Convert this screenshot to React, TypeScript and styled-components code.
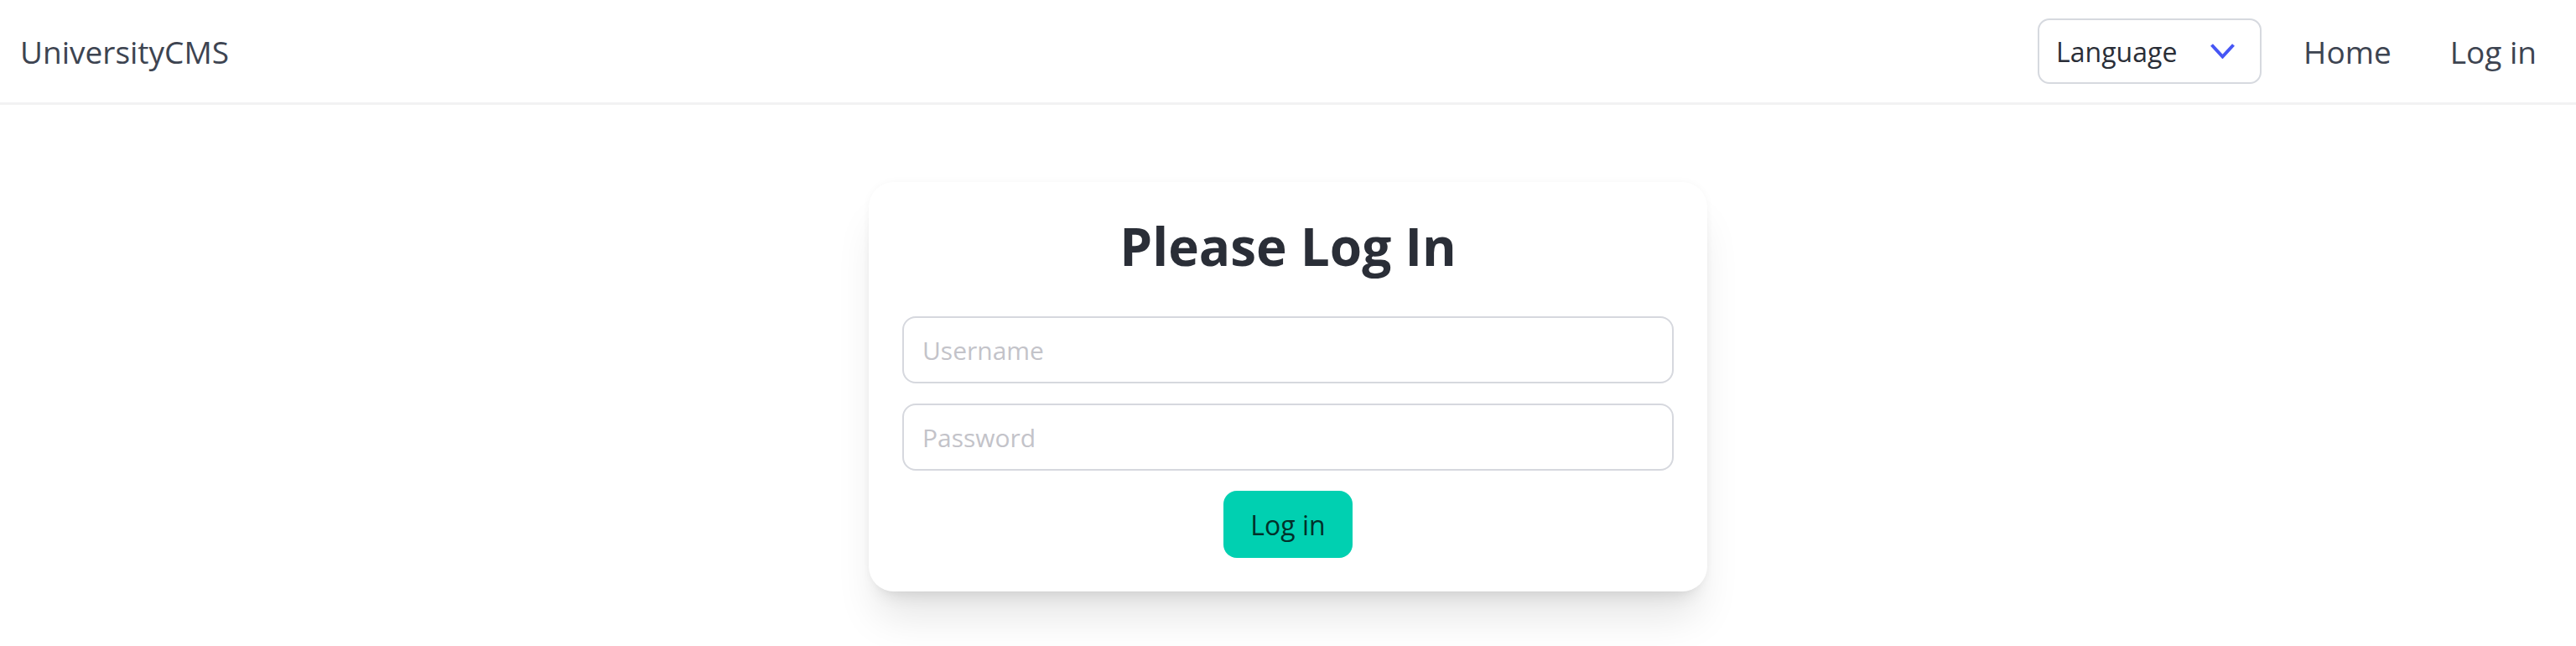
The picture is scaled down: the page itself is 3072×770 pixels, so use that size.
import React, { useState } from 'react';
import styled, { createGlobalStyle } from 'styled-components';

const GlobalStyle = createGlobalStyle`
  html, body {
    margin: 0;
    padding: 0;
    background: #ffffff;
    font-family: "Open Sans", "Noto Sans", sans-serif;
  }
  * {
    box-sizing: border-box;
  }
`;

const Page = styled.div`
  min-height: 100vh;
  background: #ffffff;
`;

const NavBar = styled.nav`
  display: flex;
  align-items: center;
  justify-content: space-between;
  height: 125px;
  padding: 0 23px 0 24px;
  border-bottom: 3px solid #f2f2f3;
`;

const Brand = styled.a`
  font-size: 37px;
  color: #3d4451;
  text-decoration: none;
  cursor: pointer;
`;

const NavRight = styled.div`
  display: flex;
  align-items: center;
  gap: 22px;
`;

const LanguageSelect = styled.button`
  display: flex;
  align-items: center;
  justify-content: space-between;
  width: 267px;
  height: 78px;
  margin-right: 4px;
  padding: 0 30px 0 20px;
  background: #ffffff;
  border: 2px solid #d6d9df;
  border-radius: 14px;
  font-family: inherit;
  font-size: 32px;
  color: #2a2e37;
  cursor: pointer;
`;

const Chevron = styled.svg`
  width: 29px;
  height: 18px;
  display: block;
`;

const NavLink = styled.a`
  padding: 0 24px;
  font-size: 37px;
  color: #3d4451;
  text-decoration: none;
  cursor: pointer;
`;

const Main = styled.main`
  display: flex;
  justify-content: center;
  padding-top: 92px;
`;

const Card = styled.form`
  display: flex;
  flex-direction: column;
  align-items: center;
  gap: 24px;
  width: 1000px;
  padding: 40px;
  background: #ffffff;
  border-radius: 30px;
  box-shadow: 0 0 10px rgba(0, 0, 0, 0.035), 0 40px 50px -10px rgba(0, 0, 0, 0.1),
    0 16px 20px -12px rgba(0, 0, 0, 0.1);
`;

const Title = styled.h1`
  margin: 0 0 24px;
  font-size: 62px;
  line-height: 72px;
  font-weight: 700;
  color: #2a2e37;
`;

const Input = styled.input`
  width: 100%;
  height: 80px;
  padding: 0 22px;
  border: 2px solid #d6d8de;
  border-radius: 16px;
  background: #ffffff;
  font-family: inherit;
  font-size: 30px;
  color: #2a2e37;
  outline: none;

  &::placeholder {
    color: #c3c3c9;
  }
`;

const SubmitButton = styled.button`
  height: 80px;
  padding: 0 32px;
  border: none;
  border-radius: 16px;
  background: #00d0b1;
  color: #02302a;
  font-family: inherit;
  font-size: 32px;
  cursor: pointer;
`;

const App: React.FC = () => {
  const [username, setUsername] = useState('');
  const [password, setPassword] = useState('');

  const handleSubmit = (e: React.FormEvent) => {
    e.preventDefault();
  };

  return (
    <Page>
      <GlobalStyle />
      <NavBar>
        <Brand href="#">UniversityCMS</Brand>
        <NavRight>
          <LanguageSelect type="button">
            Language
            <Chevron viewBox="0 0 29 18" fill="none">
              <polyline points="1.5,1.5 14.5,15.5 27.5,1.5" stroke="#4656f5" strokeWidth="4" />
            </Chevron>
          </LanguageSelect>
          <NavLink href="#">Home</NavLink>
          <NavLink href="#">Log in</NavLink>
        </NavRight>
      </NavBar>
      <Main>
        <Card onSubmit={handleSubmit}>
          <Title>Please Log In</Title>
          <Input
            type="text"
            placeholder="Username"
            value={username}
            onChange={(e) => setUsername(e.target.value)}
          />
          <Input
            type="password"
            placeholder="Password"
            value={password}
            onChange={(e) => setPassword(e.target.value)}
          />
          <SubmitButton type="submit">Log in</SubmitButton>
        </Card>
      </Main>
    </Page>
  );
};

export default App;
